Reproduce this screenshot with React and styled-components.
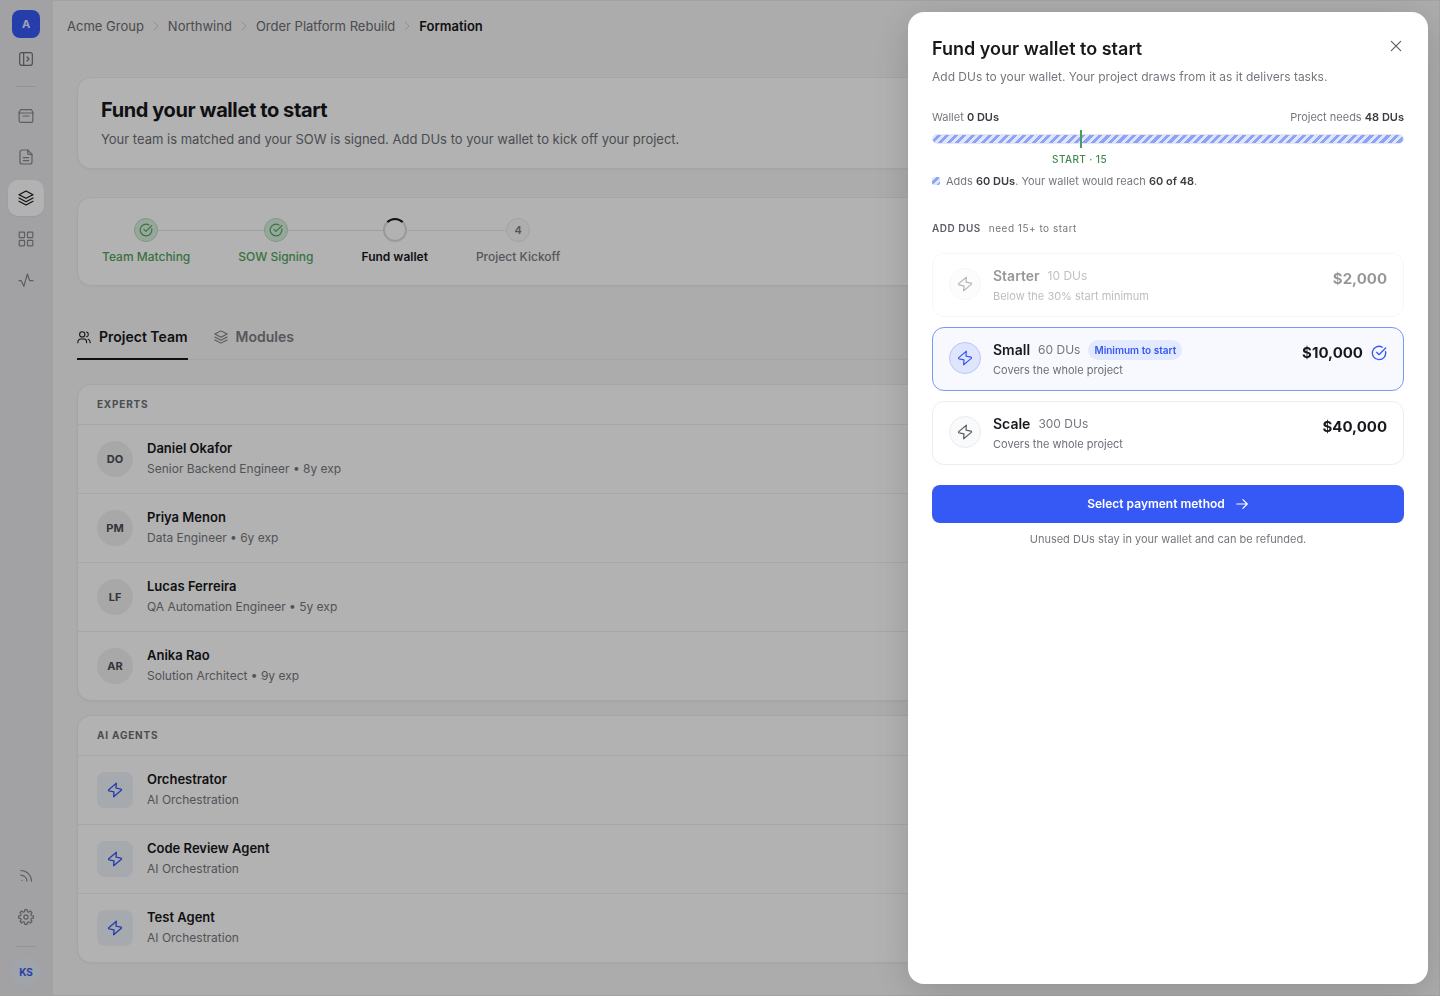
import React, { useState } from 'react';

import styled, { createGlobalStyle, css } from 'styled-components';

const GlobalStyle = createGlobalStyle`
    *, *::before, *::after{
        box-sizing: border-box;
    }
    body{
        margin: 0;
        background-color: #e8e9ed;
        color: #17181c;
        font-family: Inter, "Liberation Sans", sans-serif;
        font-size: 13px;
        line-height: 20px;
    }
    button{
        font: inherit;
        color: inherit;
        border: none;
        background: none;
        padding: 0;
        cursor: pointer;
    }
    h1, h2, h3, p, ul, ol, fieldset, legend{
        margin: 0;
        padding: 0;
    }
    ul, ol{
        list-style: none;
    }
    a{
        color: inherit;
        text-decoration: none;
    }
    svg{
        display: block;
        flex: none;
    }
`

const Page = styled.div`
    display: flex;
    min-height: 100vh;
`

const Sidebar = styled.nav`
    position: sticky;
    top: 0;
    height: 100vh;
    width: 52px;
    flex: none;
    display: flex;
    flex-direction: column;
    align-items: center;
    padding: 10px 0;
    .spacer{
        flex: 1;
    }
`

const Workspace = styled.button`
    width: 28px;
    height: 28px;
    border-radius: 8px;
    background-color: #3659f5;
    color: #e6eaff;
    font-size: 11px;
    font-weight: 700;
`

const NavGroup = styled.div`
    display: flex;
    flex-direction: column;
    gap: 5px;
`

const NavButton = styled.button`
    width: 36px;
    height: 36px;
    border-radius: 10px;
    display: flex;
    align-items: center;
    justify-content: center;
    color: #85878c;
    ${({ $small }) => $small && css`
        height: 28px;
        margin-top: 7px;
        color: #6f7177;
    `}
    ${({ $active }) => $active && css`
        background-color: #fff;
        color: #17181c;
        box-shadow: 0 1px 2px rgba(0, 0, 0, 0.06);
    `}
`

const Divider = styled.hr`
    width: 20px;
    height: 1px;
    border: none;
    margin: ${({ $margin }) => $margin};
    background-color: #d3d4d8;
`

const UserBadge = styled.button`
    width: 28px;
    height: 28px;
    border-radius: 50%;
    background-color: #e6ebf5;
    color: #3659f5;
    font-size: 10px;
    font-weight: 700;
`

const Main = styled.main`
    flex: 1;
    min-width: 0;
    border: 1px solid #e9e9ec;
    background-color: #f6f6f6;
`

const Breadcrumb = styled.ol`
    display: flex;
    align-items: center;
    gap: 6px;
    height: 50px;
    padding: 0 14px;
    color: #6b6d72;
    li{
        display: flex;
        align-items: center;
        gap: 6px;
    }
    svg{
        color: #c9cacd;
    }
    [aria-current]{
        color: #17181c;
        font-weight: 600;
    }
`

const Content = styled.div`
    display: flex;
    flex-direction: column;
    padding: 26px 24px 16px;
`

const Card = styled.section`
    border: 1px solid #ececee;
    border-radius: 14px;
    background-color: #fff;
    box-shadow: 0 1px 2px rgba(0, 0, 0, 0.03);
`

const Intro = styled(Card)`
    padding: 19px 23px;
    margin-bottom: 28px;
    h1{
        font-size: 20px;
        line-height: 26px;
        font-weight: 700;
        letter-spacing: -0.02em;
    }
    p{
        margin-top: 6px;
        color: #6b6f76;
    }
`

const Steps = styled(Card).attrs({ as: 'ol' })`
    display: flex;
    gap: 48px;
    padding: 20px 24px 18px;
    margin-bottom: 30px;
`

const Step = styled.li`
    display: flex;
    flex-direction: column;
    gap: 5px;
    font-size: 12px;
    font-weight: 500;
    color: ${({ $state }) => $state === 'done' ? '#50a55a' : $state === 'current' ? '#17181c' : '#7a7d83'};
    ${({ $state }) => $state === 'current' && css`
        font-weight: 600;
    `}
    .track{
        display: flex;
        align-items: center;
        margin: 0 -24px;
    }
`

const Line = styled.span`
    flex: 1;
    height: 1px;
    background-color: ${({ $tone }) => $tone === 'green' ? '#dbe8df' : $tone === 'gray' ? '#ebecee' : 'transparent'};
`

const Marker = styled.span`
    width: 24px;
    height: 24px;
    border-radius: 50%;
    display: flex;
    align-items: center;
    justify-content: center;
    font-size: 11px;
    font-weight: 600;
    border: 1px solid #e9eaec;
    background-color: #f9f9fa;
    ${({ $state }) => $state === 'done' && css`
        border-color: #b4dcbd;
        background-color: #d9efdf;
    `}
    ${({ $state }) => $state === 'current' && css`
        border: 2px solid #d9dcdd;
        border-top-color: #17181c;
        background-color: #fff;
    `}
`

const Tabs = styled.div`
    display: flex;
    gap: 26px;
    border-bottom: 1px solid #ebecee;
    margin-bottom: 24px;
`

const Tab = styled.button`
    display: flex;
    align-items: center;
    gap: 8px;
    height: 44px;
    margin-bottom: -1px;
    font-size: 14px;
    font-weight: 600;
    color: ${({ $active }) => $active ? '#17181c' : '#7a7d83'};
    border-bottom: 2px solid ${({ $active }) => $active ? '#17181c' : 'transparent'};
`

const Group = styled(Card)`
    margin-bottom: 14px;
    h2{
        height: 40px;
        padding: 0 19px;
        border-bottom: 1px solid #eeeff1;
        font-size: 10px;
        line-height: 38px;
        font-weight: 700;
        letter-spacing: 0.08em;
        color: #6b6f76;
    }
`

const Member = styled.li`
    display: flex;
    align-items: center;
    gap: 14px;
    padding: 12px 19px;
    &:not(:last-child){
        border-bottom: 1px solid #eeeff1;
    }
    h3{
        font-size: 13px;
        line-height: 22px;
        font-weight: 600;
    }
    p{
        font-size: 12px;
        line-height: 20px;
        color: #74777d;
    }
    .text{
        height: 44px;
    }
`

const Avatar = styled.span`
    width: 36px;
    height: 36px;
    border-radius: ${({ $agent }) => $agent ? '8px' : '50%'};
    display: flex;
    align-items: center;
    justify-content: center;
    font-size: 11px;
    font-weight: 700;
    color: ${({ $agent }) => $agent ? '#3659f5' : '#4a4c52'};
    background-color: ${({ $agent }) => $agent ? '#eef2fa' : '#f1f1f3'};
`

const Backdrop = styled.div`
    position: fixed;
    inset: 0;
    background-color: rgba(0, 0, 0, 0.3);
`

const Drawer = styled.aside`
    position: fixed;
    top: 12px;
    right: 12px;
    bottom: 12px;
    width: 520px;
    max-width: calc(100vw - 24px);
    overflow: auto;
    padding: 24px;
    border-radius: 16px;
    background-color: #fff;
    box-shadow: 0 8px 40px rgba(0, 0, 0, 0.16);
`

const DrawerHeader = styled.header`
    display: flex;
    align-items: flex-start;
    justify-content: space-between;
    h2{
        font-size: 18px;
        line-height: 26px;
        font-weight: 600;
    }
    p{
        margin-top: 4px;
        font-size: 12px;
        line-height: 22px;
        color: #74777d;
    }
`

const CloseButton = styled.button`
    display: flex;
    align-items: center;
    justify-content: center;
    width: 16px;
    height: 20px;
    color: #5b5e64;
`

const Meter = styled.div`
    margin-top: 20px;
    font-size: 11px;
    line-height: 18px;
    color: #74777d;
    strong{
        font-weight: 600;
        color: #3b3d42;
    }
    .amounts{
        display: flex;
        justify-content: space-between;
    }
`

const stripes = css`
    background: repeating-linear-gradient(135deg, #dfe5fd 0 3px, #8ea2f6 3px 6px);
`

const Bar = styled.div`
    position: relative;
    height: 10px;
    margin-top: 8px;
    border-radius: 5px;
    border: 1px solid #e4e7f3;
    ${stripes}
`

const StartMark = styled.span`
    position: absolute;
    top: -5px;
    width: 2px;
    height: 18px;
    background-color: #4a9a66;
`

const StartLabel = styled.p`
    font-size: 10px;
    line-height: 18px;
    font-weight: 500;
    letter-spacing: 0.04em;
    color: #3f8a4b;
    margin-top: 6px;
    text-align: center;
`

const Legend = styled.p`
    display: flex;
    align-items: center;
    gap: 6px;
    margin-top: 4px;
    i{
        width: 8px;
        height: 8px;
        border-radius: 2px;
        ${stripes}
    }
`

const Packages = styled.fieldset`
    display: flex;
    flex-direction: column;
    gap: 10px;
    min-width: 0;
    margin-top: 29px;
    border: none;
    legend{
        display: flex;
        gap: 8px;
        padding-bottom: 16px;
        font-size: 10px;
        line-height: 18px;
        font-weight: 600;
        letter-spacing: 0.05em;
        color: #5b5e64;
    }
    legend span{
        font-weight: 400;
        color: #74777d;
    }
`

const Package = styled.label`
    position: relative;
    display: flex;
    align-items: flex-start;
    gap: 12px;
    height: 64px;
    padding: 0 16px;
    border: 1px solid ${({ $selected }) => $selected ? '#7f96f0' : '#ebecee'};
    border-radius: 12px;
    background-color: ${({ $selected }) => $selected ? '#f7f9ff' : '#fff'};
    cursor: pointer;
    ${({ $disabled }) => $disabled && css`
        opacity: 0.45;
        cursor: not-allowed;
    `}
    input{
        position: absolute;
        opacity: 0;
    }
    .body{
        flex: 1;
        padding-top: 12px;
    }
    .title{
        display: flex;
        align-items: center;
        gap: 8px;
        height: 20px;
        font-size: 12px;
        color: #74777d;
    }
    .title strong{
        font-size: 14px;
        font-weight: 600;
        color: #17181c;
    }
    .note{
        font-size: 11px;
        line-height: 20px;
        color: #6b6f76;
    }
`

const PackageIcon = styled.span`
    width: 32px;
    height: 32px;
    margin-top: 14px;
    border-radius: 50%;
    display: flex;
    align-items: center;
    justify-content: center;
    border: 1px solid ${({ $selected }) => $selected ? '#b9c6f8' : '#ebecee'};
    background-color: ${({ $selected }) => $selected ? '#dfe5fd' : '#f9fafb'};
    color: ${({ $selected }) => $selected ? '#3659f5' : '#5b5e64'};
`

const Badge = styled.span`
    padding: 0 6px;
    border-radius: 10px;
    background-color: #e3e9fe;
    color: #3659f5;
    font-size: 10px;
    font-weight: 600;
`

const Price = styled.span`
    display: flex;
    align-items: center;
    gap: 8px;
    padding-top: 14px;
    font-size: 15px;
    line-height: 22px;
    font-weight: 700;
    svg{
        color: #3659f5;
    }
`

const PayButton = styled.button`
    display: flex;
    align-items: center;
    justify-content: center;
    gap: 10px;
    width: 100%;
    height: 38px;
    margin-top: 20px;
    border-radius: 8px;
    background-color: #3659f5;
    color: #fff;
    font-size: 12px;
    font-weight: 600;
`

const Footnote = styled.p`
    margin-top: 6px;
    font-size: 11px;
    text-align: center;
    color: #74777d;
`

function Icon({ size = 16, stroke = 1.8, children }) {
    return (
        <svg width={size} height={size} viewBox='0 0 24 24' fill='none' stroke='currentColor' strokeWidth={stroke} strokeLinecap='round' strokeLinejoin='round' aria-hidden='true'>
            {children}
        </svg>
    );
}

// eight teeth, each one drawn as two outer and two inner points
function gearPath() {
    const points = [];
    for (let tooth = 0; tooth < 8; tooth++) {
        [[-15, 8.3], [-9, 11.2], [9, 11.2], [15, 8.3]].forEach(([offset, radius]) => {
            const angle = (tooth * 45 + offset) * Math.PI / 180;
            points.push((12 + radius * Math.sin(angle)).toFixed(2) + ' ' + (12 - radius * Math.cos(angle)).toFixed(2));
        });
    }
    return 'M' + points.join('L') + 'z';
}

const icons = {
    panel: <><rect x='2.5' y='2.5' width='19' height='19' rx='3' /><path d='M8.5 2.5v19M13.5 9l3 3-3 3' /></>,
    box: <><path d='M1.8 7.5V19a2.5 2.5 0 0 0 2.5 2.500h15.400a2.500 2.500 0 0 0 2.500-2.500V7.500' /><path d='M1.200 7.500 3 3.800A2.200 2.200 0 0 1 5 2.500h14a2.200 2.200 0 0 1 2 1.300l1.800 3.700z' /><path d='M7.500 12h9' /></>,
    file: <><path d='M14.500 1.500H6a3 3 0 0 0-3 3v15a3 3 0 0 0 3 3h12a3 3 0 0 0 3-3V8z' /><path d='M14.500 1.500V6a2 2 0 0 0 2 2H21M8 13h8M8 17.500h8' /></>,
    layers: <><path d='M12 1.500 1.500 7 12 12.500 22.500 7z' /><path d='M1.500 12 12 17.500 22.500 12M1.500 17 12 22.500 22.500 17' /></>,
    grid: <><rect x='1.8' y='1.800' width='8' height='8' rx='.8' /><rect x='14.200' y='1.800' width='8' height='8' rx='.8' /><rect x='1.800' y='14.200' width='8' height='8' rx='.8' /><rect x='14.200' y='14.200' width='8' height='8' rx='.8' /></>,
    activity: <path d='M1.500 13h3.300l4 8.500L14 3l3.500 10h5' />,
    feed: <><path d='M3 10.500A10.500 10.500 0 0 1 13.500 21M3 2.500A18.500 18.500 0 0 1 21.500 21' /><path d='M5 19.500h.01' /></>,
    gear: <><circle cx='12' cy='12' r='3.200' /><path d={gearPath()} /></>,
    check: <><path d='M21.801 10A10 10 0 1 1 17 3.335' /><path d='m8.500 11 3.500 3.500L22 4.500' /></>,
    users: <><circle cx='9' cy='7.500' r='4.500' /><path d='M1.500 22v-1.500a5 5 0 0 1 5-5h5a5 5 0 0 1 5 5V22M16.500 3.300a4.500 4.500 0 0 1 0 8.400M19 15.800a5 5 0 0 1 3.500 4.700V22' /></>,
    bolt: <path d='M14 1.800 2.600 11.500c-.7.700-.4 1.700.5 1.900l7.400 1.400-.5 7.400L21.400 12.500c.7-.7.400-1.700-.5-1.900l-7.400-1.400z' />,
    chevron: <path d='m8 4 8 8-8 8' />,
    arrow: <path d='M3 12h18M13.500 4.500 21 12l-7.500 7.500' />,
    close: <path d='M4 4l16 16M20 4 4 20' />,
};

const crumbs = ['Acme Group', 'Northwind', 'Order Platform Rebuild', 'Formation'];

const steps = [
    { label: 'Team Matching', state: 'done', before: null, after: 'green' },
    { label: 'SOW Signing', state: 'done', before: 'green', after: 'green' },
    { label: 'Fund wallet', state: 'current', before: 'green', after: 'gray' },
    { label: 'Project Kickoff', state: 'todo', before: 'gray', after: null },
];

const experts = [
    { initials: 'DO', name: 'Daniel Okafor', role: 'Senior Backend Engineer • 8y exp' },
    { initials: 'PM', name: 'Priya Menon', role: 'Data Engineer • 6y exp' },
    { initials: 'LF', name: 'Lucas Ferreira', role: 'QA Automation Engineer • 5y exp' },
    { initials: 'AR', name: 'Anika Rao', role: 'Solution Architect • 9y exp' },
];

const agents = [
    { name: 'Orchestrator', role: 'AI Orchestration' },
    { name: 'Code Review Agent', role: 'AI Orchestration' },
    { name: 'Test Agent', role: 'AI Orchestration' },
];

const packages = [
    { id: 'starter', name: 'Starter', dus: 10, price: '$2,000', note: 'Below the 30% start minimum', disabled: true },
    { id: 'small', name: 'Small', dus: 60, price: '$10,000', note: 'Covers the whole project', badge: 'Minimum to start' },
    { id: 'scale', name: 'Scale', dus: 300, price: '$40,000', note: 'Covers the whole project' },
];

const needed = 48;
const minimum = 15;
const startAt = (minimum / needed) * 100;

function SideNav() {
    return (
        <Sidebar aria-label='Primary'>
            <Workspace>A</Workspace>
            <NavButton $small aria-label='Expand sidebar'><Icon>{icons.panel}</Icon></NavButton>
            <Divider $margin='13px 0 11px' />
            <NavGroup>
                <NavButton aria-label='Inbox'><Icon>{icons.box}</Icon></NavButton>
                <NavButton aria-label='Documents'><Icon>{icons.file}</Icon></NavButton>
                <NavButton $active aria-label='Projects'><Icon>{icons.layers}</Icon></NavButton>
                <NavButton aria-label='Apps'><Icon>{icons.grid}</Icon></NavButton>
                <NavButton aria-label='Activity'><Icon>{icons.activity}</Icon></NavButton>
            </NavGroup>
            <div className='spacer' />
            <NavGroup>
                <NavButton aria-label='Updates'><Icon size={14}>{icons.feed}</Icon></NavButton>
                <NavButton aria-label='Settings'><Icon>{icons.gear}</Icon></NavButton>
            </NavGroup>
            <Divider $margin='11px 0' />
            <UserBadge>KS</UserBadge>
        </Sidebar>
    );
}

function MemberGroup({ title, members }) {
    return (
        <Group>
            <h2>{title}</h2>
            <ul>
                {members.map(member => (
                    <Member key={member.name}>
                        <Avatar $agent={!member.initials}>
                            {member.initials || <Icon stroke={2}>{icons.bolt}</Icon>}
                        </Avatar>
                        <div className='text'>
                            <h3>{member.name}</h3>
                            <p>{member.role}</p>
                        </div>
                    </Member>
                ))}
            </ul>
        </Group>
    );
}

function FundDrawer() {
    const [selected, setSelected] = useState('small');
    const current = packages.find(item => item.id === selected);

    return (
        <Drawer role='dialog' aria-labelledby='fund-title'>
            <DrawerHeader>
                <div>
                    <h2 id='fund-title'>Fund your wallet to start</h2>
                    <p>Add DUs to your wallet. Your project draws from it as it delivers tasks.</p>
                </div>
                <CloseButton aria-label='Close'><Icon size={14} stroke={2}>{icons.close}</Icon></CloseButton>
            </DrawerHeader>
            <Meter>
                <div className='amounts'>
                    <span>Wallet <strong>0 DUs</strong></span>
                    <span>Project needs <strong>{needed} DUs</strong></span>
                </div>
                <Bar>
                    <StartMark style={{ left: startAt + '%' }} />
                </Bar>
                <StartLabel style={{ width: startAt * 2 + '%' }}>START · {minimum}</StartLabel>
                <Legend>
                    <i />
                    <span>Adds <strong>{current.dus} DUs</strong>. Your wallet would reach <strong>{current.dus} of {needed}</strong>.</span>
                </Legend>
            </Meter>
            <Packages>
                <legend>ADD DUS <span>need {minimum}+ to start</span></legend>
                {packages.map(item => (
                    <Package key={item.id} $selected={item.id === selected} $disabled={item.disabled}>
                        <input type='radio' name='package' value={item.id} checked={item.id === selected} disabled={item.disabled} onChange={() => setSelected(item.id)} />
                        <PackageIcon $selected={item.id === selected}><Icon>{icons.bolt}</Icon></PackageIcon>
                        <div className='body'>
                            <div className='title'>
                                <strong>{item.name}</strong>
                                <span>{item.dus} DUs</span>
                                {item.badge && <Badge>{item.badge}</Badge>}
                            </div>
                            <div className='note'>{item.note}</div>
                        </div>
                        <Price>
                            {item.price}
                            {item.id === selected && <Icon stroke={2}>{icons.check}</Icon>}
                        </Price>
                    </Package>
                ))}
            </Packages>
            <PayButton>
                Select payment method
                <Icon size={14} stroke={2}>{icons.arrow}</Icon>
            </PayButton>
            <Footnote>Unused DUs stay in your wallet and can be refunded.</Footnote>
        </Drawer>
    );
}

function App() {
    return (
        <>
            <GlobalStyle />
            <Page>
                <SideNav />
                <Main>
                    <nav aria-label='Breadcrumb'>
                        <Breadcrumb>
                            {crumbs.map((crumb, i) => (
                                <li key={crumb}>
                                    {i > 0 && <Icon size={12}>{icons.chevron}</Icon>}
                                    {i === crumbs.length - 1 ?
                                        <span aria-current='page'>{crumb}</span>
                                        :
                                        <a href='#'>{crumb}</a>
                                    }
                                </li>
                            ))}
                        </Breadcrumb>
                    </nav>
                    <Content>
                        <Intro>
                            <h1>Fund your wallet to start</h1>
                            <p>Your team is matched and your SOW is signed. Add DUs to your wallet to kick off your project.</p>
                        </Intro>
                        <Steps>
                            {steps.map((step, i) => (
                                <Step key={step.label} $state={step.state}>
                                    <div className='track'>
                                        <Line $tone={step.before} />
                                        <Marker $state={step.state}>
                                            {step.state === 'done' && <Icon size={14} stroke={2}>{icons.check}</Icon>}
                                            {step.state === 'todo' && i + 1}
                                        </Marker>
                                        <Line $tone={step.after} />
                                    </div>
                                    <span>{step.label}</span>
                                </Step>
                            ))}
                        </Steps>
                        <Tabs role='tablist'>
                            <Tab role='tab' aria-selected='true' $active><Icon size={14}>{icons.users}</Icon>Project Team</Tab>
                            <Tab role='tab' aria-selected='false'><Icon size={14}>{icons.layers}</Icon>Modules</Tab>
                        </Tabs>
                        <MemberGroup title='EXPERTS' members={experts} />
                        <MemberGroup title='AI AGENTS' members={agents} />
                    </Content>
                </Main>
            </Page>
            <Backdrop />
            <FundDrawer />
        </>
    );
}

export default App;
